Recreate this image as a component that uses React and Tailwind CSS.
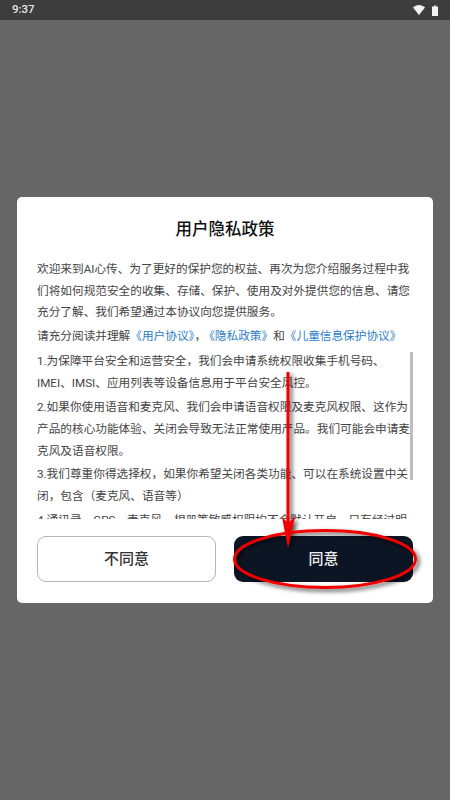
export default function App() {
  return (
    <div className="relative w-[450px] h-[800px] overflow-hidden bg-[#666666] font-['Roboto','Noto_Sans_CJK_SC',sans-serif]">
      {/* status bar */}
      <div className="h-5 bg-[#3d3d3d] flex items-center justify-between pl-3 pr-[12px] text-[#e8e8e8]">
        <span className="text-[11.5px] font-medium">9:37</span>
        <div className="flex items-center gap-[7px]">
          <svg width="12" height="10" viewBox="0 0 12 10"><path d="M0 2.6C1.6 1 3.7 0 6 0s4.4 1 6 2.6L6 10z" fill="#f2f2f2" /></svg>
          <svg width="6" height="11" viewBox="0 0 6 11"><path d="M2 0h2v1.5H2z" fill="#8f8f8f" /><path d="M2 1h2v.5h2V11H0V1.500h2z" fill="#f2f2f2" /></svg>
        </div>
      </div>

      {/* dialog */}
      <div className="mx-[17px] mt-[177px] h-[406px] bg-white rounded-[5px] flex flex-col px-5">
        <h1 className="mt-[21px] text-center text-[16.5px] leading-[23px] font-medium text-[#111111]">用户隐私政策</h1>

        <div className="mt-[18px] text-[11.66px] leading-[21.7px] text-[#444444]">
          <p className="mb-[1.5px]">欢迎来到AI心传、为了更好的保护您的权益、再次为您介绍服务过程中我们将如何规范安全的收集、存储、保护、使用及对外提供您的信息、请您充分了解、我们希望通过本协议向您提供服务。</p>
          <p>
            请充分阅读并理解
            <span className="text-[#2b7cc9]">《用户协议》</span>，<span className="ml-[3px] text-[#2b7cc9]">《隐私政策》</span>和
            <span className="text-[#2b7cc9]">《儿童信息保护协议》</span>
          </p>
        </div>

        <div className="relative mt-[1px] h-[171px] overflow-hidden text-[11.66px] leading-[21.8px] text-[#444444]">
          <div className="flex flex-col gap-[2px] pt-[3px]">
            <p>1.为保障平台安全和运营安全，我们会申请系统权限收集手机号码、IMEI、IMSI、应用列表等设备信息用于平台安全风控。</p>
            <p>2.如果你使用语音和麦克风、我们会申请语音权限及麦克风权限、这作为产品的核心功能体验、关闭会导致无法正常使用产品。我们可能会申请麦克风及语音权限。</p>
            <p>3.我们尊重你得选择权，如果你希望关闭各类功能、可以在系统设置中关闭，包含（麦克风、语音等）</p>
            <p>4.通讯录、GPS、麦克风、相册等敏感权限均不会默认开启，只有经过明确授权才可以使用。</p>
          </div>
          {/* scrollbar */}
          <div className="absolute right-0 top-[4px] w-[3px] h-[128px] bg-[#bdbdbd]" />
        </div>

        <div className="mt-[17px] flex justify-between">
          <button className="w-[179px] h-[46px] rounded-[9px] border border-[#b5b5b5] bg-white text-[15px] font-medium text-[#333333]">不同意</button>
          <button className="w-[179px] h-[46px] rounded-[9px] bg-[#0c1524] text-[15px] font-medium text-[#eeeeee]">同意</button>
        </div>
      </div>

      {/* red annotation */}
      <svg className="absolute inset-0 pointer-events-none" width="450" height="800" viewBox="0 0 450 800">
        <defs>
          <filter id="sh" x="-20%" y="-20%" width="140%" height="140%">
            <feDropShadow dx="2.5" dy="2.5" stdDeviation="2" floodColor="#000" floodOpacity="0.7" />
          </filter>
        </defs>
        <g filter="url(#sh)">
          <path d="M288 372V530" stroke="#f00000" strokeWidth="3" fill="none" />
          <path d="M282 517L288 548L295 517L288 523z" fill="#f00000" />
          <ellipse cx="325" cy="559" rx="90.500" ry="28.500" fill="none" stroke="#f00000" strokeWidth="3" />
        </g>
      </svg>
    </div>
  );
}
